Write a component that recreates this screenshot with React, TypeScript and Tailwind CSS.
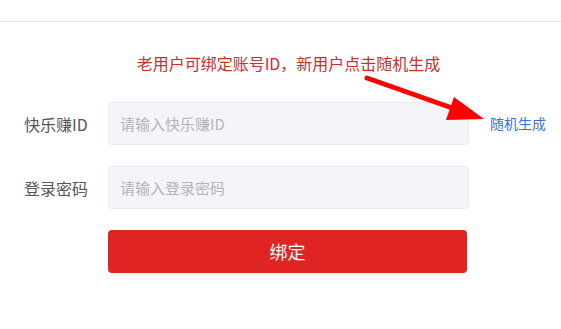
export default function App() {
  return (
    <div className="relative w-[561px] h-[329px] bg-white overflow-hidden font-['Noto_Sans_CJK_SC','Noto_Sans',sans-serif]">
      <div className="h-[22px] border-b border-[#e6e6e6]" />

      <div className="ml-[108px] w-[361px] mt-[29px] text-center text-[16px] leading-[24px] text-[#c9302c]">
        老用户可绑定账号ID，新用户点击随机生成
      </div>

      <div className="mt-[27px] flex items-center">
        <label className="w-[108px] pl-[24px] text-[16px] text-[#555]">快乐赚ID</label>
        <input
          className="w-[361px] h-[43px] px-[11px] rounded-[4px] bg-[#f4f5f8] border border-[#ebecf0] text-[15px] text-[#333] placeholder:text-[#b3b3b8] outline-none"
          placeholder="请输入快乐赚ID"
        />
        <a className="ml-[21px] text-[14px] text-[#3b6fd0] cursor-pointer">随机生成</a>
      </div>

      <div className="mt-[21px] flex items-center">
        <label className="w-[108px] pl-[24px] text-[16px] text-[#555]">登录密码</label>
        <input
          type="password"
          className="w-[361px] h-[43px] px-[11px] rounded-[4px] bg-[#f4f5f8] border border-[#ebecf0] text-[15px] text-[#333] placeholder:text-[#b3b3b8] outline-none"
          placeholder="请输入登录密码"
        />
      </div>

      <button className="mt-[21px] ml-[108px] w-[359px] h-[43px] rounded-[4px] bg-[#e02323] text-white text-[18px]">
        绑定
      </button>

      {/* annotation arrow */}
      <svg className="absolute inset-0 pointer-events-none" width="561" height="329">
        <line x1="367" y1="78" x2="455" y2="109" stroke="#ff0000" strokeWidth="5" strokeLinecap="round" />
        <polygon points="454,97 446,120 484,119" fill="#ff0000" />
      </svg>
    </div>
  );
}
